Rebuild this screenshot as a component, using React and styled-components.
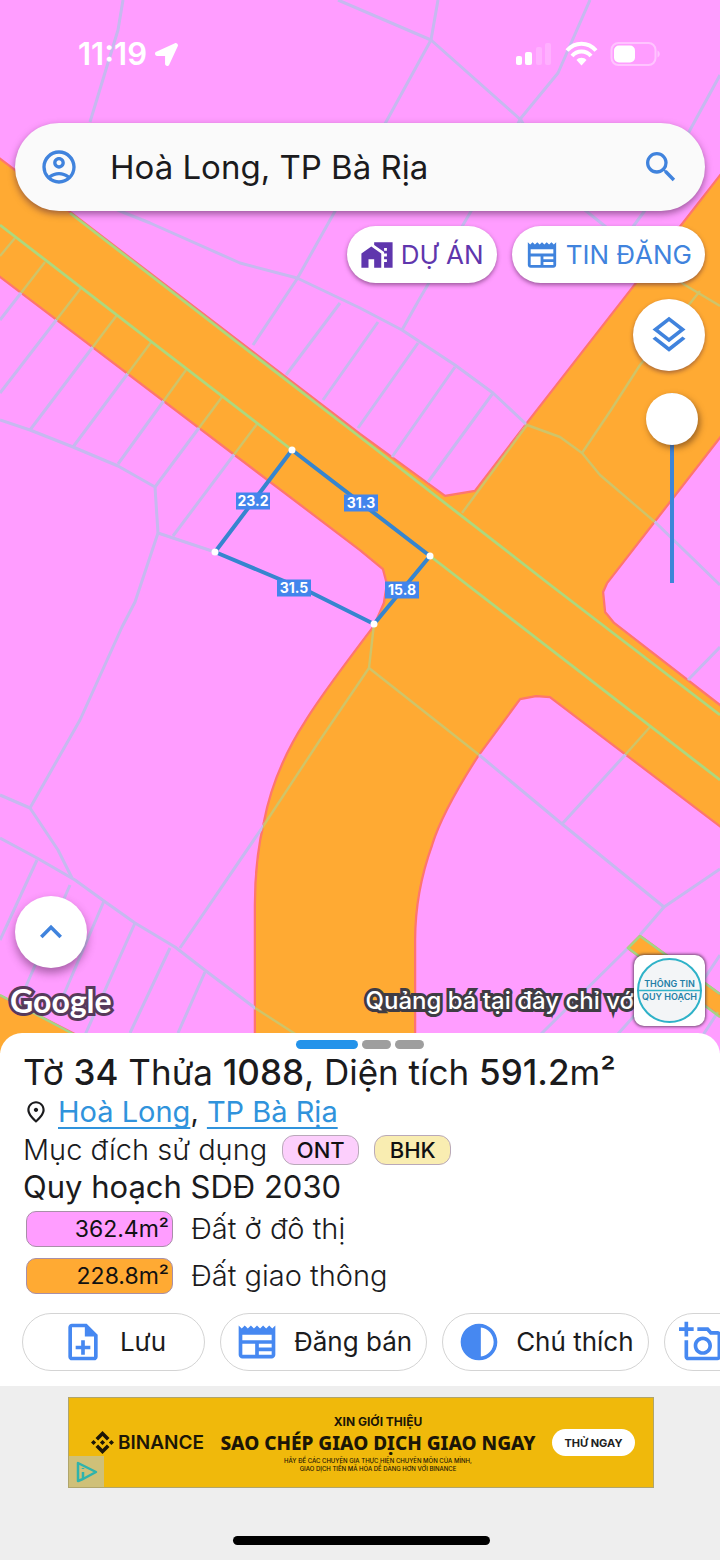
import React, { useState } from 'react';
import styled, { createGlobalStyle } from 'styled-components';
import {
  MdHomeWork,
  MdNewspaper,
  MdSearch,
  MdOutlineAccountCircle,
  MdOutlineLayers,
  MdKeyboardArrowUp,
  MdOutlinePlace,
  MdOutlineNoteAdd,
  MdContrast,
  MdOutlineAddAPhoto,
} from 'react-icons/md';
import { FaLocationArrow } from 'react-icons/fa';

const GlobalStyle = createGlobalStyle`
  * { box-sizing: border-box; }
  body {
    margin: 0;
    background: #eeeeee;
    color: #1b1b1d;
    font-family: Inter, "Noto Sans", sans-serif;
  }
  button, input { font-family: inherit; }
`;

const Page = styled.div`
  display: flex;
  flex-direction: column;
  min-height: 100vh;
  overflow: hidden;
`;

/* ---------- map ---------- */

const MapArea = styled.main`
  position: relative;
  z-index: 0;
  flex: 1;
  display: flex;
  flex-direction: column;
  padding: 0 15px 27px;
`;

const MapSvg = styled.svg`
  position: absolute;
  inset: 0;
  z-index: -1;
  width: 100%;
  height: 100%;
  background: #ff9dff;
`;

const StatusBar = styled.header`
  display: flex;
  align-items: center;
  justify-content: space-between;
  height: 108px;
  padding: 0 45px 0 63px;
  color: #fff;
`;

const StatusGroup = styled.div`
  display: flex;
  align-items: center;
  gap: 8px;
`;

const Clock = styled.time`
  font-size: 31px;
  font-weight: 600;
  line-height: 32px;
`;

const SearchBar = styled.form`
  display: flex;
  align-items: center;
  height: 88px;
  margin-top: 15px;
  padding: 0 24px;
  border-radius: 44px;
  background: #fafafa;
  box-shadow: 0 3px 7px rgba(60, 20, 60, 0.5);
`;

const SearchInput = styled.input`
  flex: 1;
  min-width: 0;
  margin: 0 20px 0 31px;
  padding: 0;
  border: 0;
  outline: 0;
  background: none;
  color: #1b1b1d;
  font-size: 33px;
  line-height: 44px;
`;

const IconButton = styled.button`
  display: flex;
  padding: 0;
  border: 0;
  background: none;
  color: #4083dd;
`;

const ChipRow = styled.div`
  display: flex;
  justify-content: flex-end;
  gap: 15px;
  margin-top: 15px;
`;

const MapChip = styled.button`
  display: flex;
  align-items: center;
  gap: 7px;
  height: 57px;
  padding: 0 13px;
  border: 0;
  border-radius: 29px;
  background: #fff;
  color: ${(props) => props.$color};
  font-size: 26px;
  line-height: 32px;
  box-shadow: 0 2px 4px rgba(60, 20, 60, 0.5);
`;

const Tools = styled.div`
  display: flex;
  flex-direction: column;
  align-items: flex-end;
  gap: 22px;
  margin-top: 16px;
`;

const RoundButton = styled.button`
  display: flex;
  align-items: center;
  justify-content: center;
  width: 72px;
  height: 72px;
  padding: 0;
  border: 0;
  border-radius: 50%;
  background: #fff;
  color: #4083dd;
  box-shadow: 0 ${(props) => props.$depth}px ${(props) => props.$depth * 2}px rgba(60, 20, 60, 0.45);
`;

const OpacitySlider = styled.input`
  appearance: none;
  writing-mode: vertical-lr;
  direction: rtl;
  width: 52px;
  height: 190px;
  margin: 0 7px 0 0;
  background: linear-gradient(#3d85d8, #3d85d8) center / 4px 100% no-repeat;

  &::-webkit-slider-thumb {
    appearance: none;
    width: 52px;
    height: 52px;
    border-radius: 50%;
    background: #fff;
    box-shadow: 2px 3px 6px rgba(60, 30, 20, 0.5);
  }
`;

const MapFooter = styled.div`
  display: flex;
  align-items: flex-end;
  justify-content: space-between;
  margin-top: auto;
`;

const Corner = styled.div`
  display: flex;
  flex-direction: column;
  gap: 13px;
`;

const GoogleMark = styled.span`
  margin-left: -5px;
  padding-bottom: 5px;
  color: #fff;
  font-family: Lato, sans-serif;
  font-size: 32px;
  font-weight: 700;
  line-height: 40px;
  -webkit-text-stroke: 6px #573a5b;
  paint-order: stroke fill;
`;

const Promo = styled.div`
  display: flex;
  align-items: center;
  justify-content: flex-end;
`;

const PromoText = styled.span`
  padding-top: 20px;
  color: #fff;
  font-size: 24px;
  font-weight: 500;
  line-height: 32px;
  white-space: nowrap;
  -webkit-text-stroke: 6px #3f3c44;
  paint-order: stroke fill;
`;

const PromoLogo = styled.div`
  flex: none;
  width: 71px;
  height: 71px;
  padding: 3px;
  border-radius: 10px;
  background: #fff;
  box-shadow: 0 0 3px 1px rgba(60, 40, 60, 0.7);
`;

/* ---------- parcel sheet ---------- */

const Sheet = styled.section`
  position: relative;
  z-index: 1;
  margin-top: -20px;
  padding: 7px 0 15px;
  border-radius: 22px 22px 0 0;
  background: #fff;
`;

const Pager = styled.div`
  display: flex;
  justify-content: center;
  gap: 4px;
`;

const PagerDot = styled.span`
  width: ${(props) => (props.$active ? 62 : 29)}px;
  height: 9px;
  border-radius: 5px;
  background: ${(props) => (props.$active ? '#2493ea' : '#9e9e9e')};
`;

const Details = styled.div`
  padding: 0 23px;
`;

const Title = styled.h1`
  margin: 2px 0 0;
  font-size: 35px;
  font-weight: 400;
  line-height: 42px;

  b { font-weight: 500; }
`;

const Place = styled.p`
  display: flex;
  align-items: center;
  gap: 9px;
  margin: 0;
  font-size: 29px;
  line-height: 38px;
`;

const PlaceLink = styled.a`
  color: #3093dc;
  text-decoration-thickness: 2px;
  text-underline-offset: 5px;
  text-decoration-skip-ink: none;
`;

const Purpose = styled.div`
  display: flex;
  align-items: center;
  gap: 15px;
  font-size: 29px;
  font-weight: 300;
  line-height: 38px;
`;

const Code = styled.span`
  min-width: 77px;
  border: 1px solid #b9a9b9;
  border-radius: 12px;
  background: ${(props) => props.$bg};
  color: #111;
  font-size: 22px;
  font-weight: 500;
  line-height: 28px;
  text-align: center;
`;

const PlanTitle = styled.h2`
  margin: 0;
  font-size: 31px;
  font-weight: 400;
  line-height: 36px;
`;

const PlanList = styled.ul`
  display: flex;
  flex-direction: column;
  gap: 11px;
  margin: 6px 0 0;
  padding: 0 3px;
  list-style: none;
`;

const PlanItem = styled.li`
  display: flex;
  align-items: center;
  gap: 18px;
  font-size: 29px;
  font-weight: 300;
  line-height: 36px;
`;

const Area = styled.span`
  width: 147px;
  padding-right: 3px;
  border: 1px solid #a88fa8;
  border-radius: 10px;
  background: ${(props) => props.$bg};
  color: #111;
  font-size: 23px;
  font-weight: 400;
  line-height: 34px;
  text-align: right;
`;

const Actions = styled.div`
  display: flex;
  gap: 15px;
  margin-top: 19px;
  padding-left: 22px;
  overflow: hidden;
`;

const Action = styled.button`
  display: flex;
  flex: none;
  align-items: center;
  justify-content: ${(props) => (props.$iconOnly ? 'flex-start' : 'center')};
  gap: 15px;
  min-width: 183px;
  height: 58px;
  padding: 0 14px;
  border: 1px solid #d4d4d4;
  border-radius: 29px;
  background: #fff;
  color: #1b1b1d;
  font-size: 26px;
  line-height: 32px;

  svg { color: #4688f1; }
`;

/* ---------- advert ---------- */

const Footer = styled.footer`
  display: flex;
  flex-direction: column;
  align-items: center;
  padding: 11px 66px 15px 68px;
`;

const Banner = styled.aside`
  position: relative;
  display: flex;
  align-items: center;
  justify-content: space-between;
  width: 100%;
  height: 91px;
  padding: 0 18px 0 22px;
  border: 1px solid #b0a56c;
  background: #f0b90b;
  color: #1c1607;
`;

const Brand = styled.div`
  display: flex;
  align-items: center;
  gap: 4px;
  font-size: 19px;
  font-weight: 600;
  line-height: 24px;
`;

const Copy = styled.div`
  display: flex;
  flex-direction: column;
  align-items: center;
  font-weight: 700;
  white-space: nowrap;
`;

const CopyIntro = styled.span`
  font-size: 12px;
  line-height: 18px;
`;

const CopyHead = styled.strong`
  padding-bottom: 2px;
  font-family: "Noto Sans", sans-serif;
  font-size: 19px;
  font-weight: 800;
  line-height: 24px;
`;

const CopyFine = styled.small`
  font-size: 6px;
  font-weight: 500;
  line-height: 8px;
  text-align: center;
`;

const TryButton = styled.button`
  height: 27px;
  width: 83px;
  padding: 0;
  border: 0;
  border-radius: 14px;
  background: #fff;
  color: #222;
  font-size: 11px;
  font-weight: 700;
`;

const AdChoices = styled.a`
  position: absolute;
  left: 0;
  bottom: 0;
  display: flex;
  align-items: center;
  justify-content: center;
  width: 35px;
  height: 31px;
  background: #cfc078;
`;

const HomeIndicator = styled.div`
  width: 257px;
  height: 9px;
  margin-top: 48px;
  border-radius: 5px;
  background: #000;
`;

const roads = [
  'M-5 155L70 212L360 434L445 496L475 491L527 423L640 278L725 169L725 431L607 583L603 592L605 612L614 623L725 709L725 830L550 697L536 696L520 699L478 756Q442 812 432 845Q415 892 415 940V1060H255V905Q255 860 264 822Q274 770 305 722Q320 697 374 626L384 603L387 584L383 569L360 550L-5 273Z',
  'M640 936L725 998V1020L628 948Z',
  'M-5 993L80 1037L90 1060H-5Z',
];

const parcels = [
  'M123 0L118 30L90 122',
  'M338 0L431 40L521 120L560 190L606 227L685 285L720 306',
  'M438 0L431 40L386 122L334 213L297 279L253 345',
  'M590 0L558 73L521 118L470 213L420 298L402 330',
  'M720 75L690 130L660 190L632 228',
  'M700 291L640 365L611 410L582 453',
  'M70 190L125 213L150 223L240 263L297 278L360 308L402 330L455 365L493 393L527 425L560 437L582 453L600 475L655 522L720 585',
  'M340 303L286 375M378 322L323 400M418 343L358 428M455 367L392 457M493 393L428 482M527 425L462 513',
  'M15 238L0 256M45 262L0 320M81 288L0 393M117 315L30 430M152 341L73 447M186 370L118 464M222 397L155 487M257 424L173 536',
  'M0 420L30 430L73 447L118 466L155 487L158 533L215 552',
  'M158 533L135 602L122 627L80 720L30 808L58 850L72 878M0 795L30 808',
  'M0 838L37 858L75 880L104 901L135 923L175 947L206 971L255 1008L300 1037',
  'M37 860L0 940M70 885L20 1000M104 901L55 1015M135 923L85 1035M170 948L130 1033M205 972L178 1033',
  'M374 624L369 668L320 740L262 828L180 948',
  'M369 668L478 754L562 824L664 907L720 869M650 727L625 755L562 824',
  'M664 907L640 935M628 948L540 1035M720 647L688 680M720 955L690 1000M718 1012L703 1035M635 1015L617 1035',
];

const corners = [[292, 450], [430, 556], [374, 624], [215, 552]];

const edges = [
  { x: 253, y: 501, length: '23.2' },
  { x: 361, y: 503, length: '31.3' },
  { x: 294, y: 588, length: '31.5' },
  { x: 402, y: 590, length: '15.8' },
];

const PlanMap = () => (
  <MapSvg viewBox="0 0 720 1053" preserveAspectRatio="xMidYMin slice" role="img" aria-label="Bản đồ quy hoạch">
    <clipPath id="road-area">
      {roads.map((d) => <path key={d} d={d} />)}
    </clipPath>
    {roads.map((d) => (
      <path key={d} d={d} fill="#ffaa33" stroke="#ff7470" strokeWidth="2.5" />
    ))}
    <g fill="none" strokeLinejoin="round">
      <g stroke="#c6b9ef" strokeWidth="3">
        {parcels.map((d) => <path key={d} d={d} />)}
      </g>
      <g clipPath="url(#road-area)">
        {roads.map((d) => (
          <path key={d} d={d} fill="#ffaa33" stroke="#ff7470" strokeWidth="2" />
        ))}
        <g stroke="#cfc469" strokeWidth="2.4">
          {parcels.map((d) => <path key={d} d={d} />)}
        </g>
      </g>
      <path d="M0 225L292 450M430 556L720 780M70 213L360 437L553 587L720 715" stroke="#add87e" strokeWidth="2.8" />
      <path d="M720 994L640 936L628 948L720 1017M0 995L75 1035" stroke="#a5d486" strokeWidth="2.5" />
      <path d="M292 450L430 556L374 624L310 592L215 552Z" stroke="#3685cf" strokeWidth="4" />
    </g>
    {corners.map(([x, y]) => <circle key={x} cx={x} cy={y} r="3.5" fill="#fff" />)}
    {edges.map(({ x, y, length }) => (
      <g key={length}>
        <rect x={x - 17} y={y - 8.5} width="34" height="17" fill="#4285ec" />
        <text x={x} y={y + 5} fill="#fff" fontSize="14" fontWeight="700" textAnchor="middle">{length}</text>
      </g>
    ))}
  </MapSvg>
);

const SignalIcons = () => (
  <svg width="146" height="26" viewBox="0 0 146 26" fill="#fff" aria-hidden="true">
    <rect x="2" y="15" width="6" height="9" rx="2" />
    <rect x="11" y="11" width="7" height="13" rx="2" />
    <rect x="22" y="6" width="6" height="18" rx="2" opacity="0.2" />
    <rect x="31" y="2" width="6" height="22" rx="2" opacity="0.2" />
    <g fill="none" stroke="#fff" strokeWidth="4">
      <path d="M53 9.500C61 0.500 74 0.500 82 9.500" />
      <path d="M58 15C63 9 72 9 77 15" />
    </g>
    <path d="M62.500 19C65 16 70 16 72.500 19L67.500 24.500Z" />
    <rect x="97.500" y="2" width="44" height="22" rx="7" fill="none" stroke="#fff" strokeOpacity="0.4" strokeWidth="2" />
    <rect x="100" y="4.500" width="21" height="17" rx="5" />
    <path d="M143.500 9.500C146.500 11 146.500 15 143.500 16.500Z" opacity="0.4" />
  </svg>
);

const BinanceIcon = () => (
  <svg width="23" height="23" viewBox="0 0 24 24" fill="currentColor" aria-hidden="true">
    <path d="M7.400 9.900L12 5.300L16.600 9.900L19.300 7.200L12 0L4.700 7.200ZM0 12L2.700 9.300L5.400 12L2.700 14.700ZM7.400 14.100L12 18.700L16.600 14.100L19.300 16.800L12 24L4.700 16.800ZM18.600 12L21.300 9.300L24 12L21.300 14.700ZM12 9.300L14.700 12L12 14.700L9.300 12Z" />
  </svg>
);

const App = () => {
  const [query, setQuery] = useState('Hoà Long, TP Bà Rịa');
  const [opacity, setOpacity] = useState(100);

  const plans = [
    { area: '362.4m²', name: 'Đất ở đô thị', color: '#ff9dff' },
    { area: '228.8m²', name: 'Đất giao thông', color: '#ffaa33' },
  ];

  const actions = [
    { label: 'Lưu', icon: <MdOutlineNoteAdd size={44} /> },
    { label: 'Đăng bán', icon: <MdNewspaper size={44} /> },
    { label: 'Chú thích', icon: <MdContrast size={44} /> },
  ];

  return (
    <Page>
      <GlobalStyle />
      <MapArea>
        <PlanMap />
        <StatusBar>
          <StatusGroup>
            <Clock>11:19</Clock>
            <FaLocationArrow size={23} />
          </StatusGroup>
          <SignalIcons />
        </StatusBar>
        <SearchBar onSubmit={(e) => e.preventDefault()}>
          <IconButton type="button" aria-label="Tài khoản"><MdOutlineAccountCircle size={40} /></IconButton>
          <SearchInput aria-label="Tìm kiếm" value={query} onChange={(e) => setQuery(e.target.value)} />
          <IconButton type="submit" aria-label="Tìm"><MdSearch size={40} /></IconButton>
        </SearchBar>
        <ChipRow>
          <MapChip type="button" $color="#5f36ad"><MdHomeWork size={34} />DỰ ÁN</MapChip>
          <MapChip type="button" $color="#4083dd"><MdNewspaper size={34} />TIN ĐĂNG</MapChip>
        </ChipRow>
        <Tools>
          <RoundButton type="button" $depth={2} aria-label="Lớp bản đồ"><MdOutlineLayers size={44} /></RoundButton>
          <OpacitySlider
            type="range"
            aria-label="Độ mờ"
            value={opacity}
            onChange={(e) => setOpacity(Number(e.target.value))}
          />
        </Tools>
        <MapFooter>
          <Corner>
            <RoundButton type="button" $depth={5} aria-label="Mở rộng"><MdKeyboardArrowUp size={44} /></RoundButton>
            <GoogleMark>Google</GoogleMark>
          </Corner>
          <Promo>
            <PromoText>Quảng bá tại đây chỉ vớ</PromoText>
            <PromoLogo>
              <svg width="65" height="65" viewBox="0 0 65 65" role="img" aria-label="Thông tin quy hoạch">
                <circle cx="32.500" cy="32.500" r="31.500" fill="#f3f5f7" stroke="#2fb2c8" strokeWidth="2" />
                <path d="M1 32.500H64" stroke="#2fb2c8" strokeWidth="1.500" />
                <g fill="#237fa6" fontSize="9" fontWeight="600" textAnchor="middle">
                  <text x="32.500" y="29">THÔNG TIN</text>
                  <text x="32.500" y="42">QUY HOẠCH</text>
                </g>
              </svg>
            </PromoLogo>
          </Promo>
        </MapFooter>
      </MapArea>

      <Sheet>
        <Pager>
          <PagerDot $active />
          <PagerDot />
          <PagerDot />
        </Pager>
        <Details>
          <Title>Tờ <b>34</b> Thửa <b>1088</b>, Diện tích <b>591.2</b>m²</Title>
          <Place>
            <MdOutlinePlace size={26} />
            <span>
              <PlaceLink href="#hoa-long">Hoà Long</PlaceLink>, <PlaceLink href="#ba-ria">TP Bà Rịa</PlaceLink>
            </span>
          </Place>
          <Purpose>
            Mục đích sử dụng
            <Code $bg="#fccffc">ONT</Code>
            <Code $bg="#f9edb1">BHK</Code>
          </Purpose>
          <PlanTitle>Quy hoạch SDĐ 2030</PlanTitle>
          <PlanList>
            {plans.map((plan) => (
              <PlanItem key={plan.area}>
                <Area $bg={plan.color}>{plan.area}</Area>
                {plan.name}
              </PlanItem>
            ))}
          </PlanList>
        </Details>
        <Actions>
          {actions.map((action) => (
            <Action type="button" key={action.label}>
              {action.icon}
              {action.label}
            </Action>
          ))}
          <Action type="button" $iconOnly aria-label="Thêm ảnh"><MdOutlineAddAPhoto size={44} /></Action>
        </Actions>
      </Sheet>

      <Footer>
        <Banner>
          <Brand><BinanceIcon />BINANCE</Brand>
          <Copy>
            <CopyIntro>XIN GIỚI THIỆU</CopyIntro>
            <CopyHead>SAO CHÉP GIAO DỊCH GIAO NGAY</CopyHead>
            <CopyFine>
              HÃY ĐỂ CÁC CHUYÊN GIA THỰC HIỆN CHUYÊN MÔN CỦA MÌNH,<br />
              GIAO DỊCH TIỀN MÃ HÓA DỄ DÀNG HƠN VỚI BINANCE
            </CopyFine>
          </Copy>
          <TryButton type="button">THỬ NGAY</TryButton>
          <AdChoices href="#ad-choices" aria-label="Lựa chọn quảng cáo">
            <svg width="22" height="22" viewBox="0 0 22 22" fill="none" stroke="#2fb3ac" strokeWidth="2.500" strokeLinejoin="round">
              <path d="M7 18L2 20V2L20 11L7 18V11M7 7V8" />
            </svg>
          </AdChoices>
        </Banner>
        <HomeIndicator />
      </Footer>
    </Page>
  );
};

export default App;
